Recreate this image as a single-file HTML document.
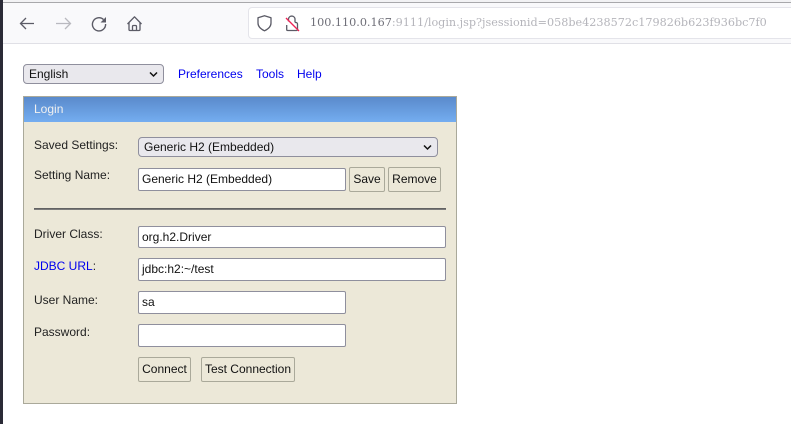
<!DOCTYPE html>
<html><head><meta charset="utf-8">
<style>
html,body{margin:0;padding:0;background:#fff;}
body{width:791px;height:424px;position:relative;overflow:hidden;font-family:"Liberation Sans",sans-serif;font-size:12px;color:#111;}
.a{position:absolute;white-space:nowrap;}
.lbl{position:absolute;left:34px;font-size:12px;line-height:14px;color:#222;white-space:nowrap;}
.in{position:absolute;box-sizing:border-box;background:#fff;border:1px solid #8f8f9d;border-radius:2px;font-size:12px;line-height:20px;padding-left:3px;color:#111;white-space:nowrap;overflow:hidden;}
.btn{position:absolute;box-sizing:border-box;background:#ece8d8;border:1px solid #aaa99a;border-radius:2px;font-size:12px;text-align:center;color:#111;white-space:nowrap;}
.sel{position:absolute;box-sizing:border-box;background:#e9e8ed;border:1px solid #8f8f9d;border-radius:4px;font-size:12px;color:#111;white-space:nowrap;}
a{color:#0000ee;text-decoration:none;}
</style></head><body>
<div class="a" style="left:0;top:0;width:791px;height:2px;background:#f2f2f4"></div>
<div class="a" style="left:0;top:2px;width:791px;height:1px;background:#a8a8ab"></div>
<div class="a" style="left:0;top:3px;width:791px;height:40px;background:#f9f9fb"></div>
<div class="a" style="left:0;top:43px;width:791px;height:1px;background:#e0e0e6"></div>
<div class="a" style="left:0;top:0;width:3px;height:424px;background:#2a2a36;z-index:5"></div>
<div class="a" style="left:248px;top:7px;width:560px;height:32px;box-sizing:border-box;background:#fff;border:1px solid #e4e4ea;border-radius:4px"></div>
<svg class="a" style="left:0;top:0" width="300" height="44" viewBox="0 0 300 44" fill="none">
<path d="M34 23.500H20.500M26 18L20.500 23.500L26 29" stroke="#5b5b66" stroke-width="1.300"/>
<path d="M56 23.500H70.500M65 18L70.500 23.500L65 29" stroke="#b9b9bf" stroke-width="1.300"/>
<path d="M103.500 19.500A6.600 6.600 0 1 0 105.600 24" stroke="#5b5b66" stroke-width="1.400"/>
<path d="M106 17V22.500H100.500Z" fill="#5b5b66"/>
<path d="M127.500 24L134.500 16.800L141.500 24M129 22.500V29.500A1 1 0 0 0 130 30.500H139A1 1 0 0 0 140 29.500V22.500M132.500 30.500V26.500A1 1 0 0 1 133.500 25.500H135.500A1 1 0 0 1 136.500 26.500V30.500" stroke="#5b5b66" stroke-width="1.300" stroke-linejoin="round"/>
<path d="M264.500 15.700L271 17.800V23C271 26.800 268 29.200 264.500 30.800C261 29.200 258 26.800 258 23V17.800Z" stroke="#5b5b66" stroke-width="1.300" stroke-linejoin="round"/>
<path d="M288.500 21.500V18.800A3.300 3.300 0 0 1 295 18.800V22.500" stroke="#5b5b66" stroke-width="1.300"/>
<path d="M286.700 25V29.500A1 1 0 0 0 287.700 30.500H296.500A1 1 0 0 0 297.500 29.500V24A1.500 1.500 0 0 0 296 22.500H295" stroke="#5b5b66" stroke-width="1.300"/>
<path d="M286 18L299 31" stroke="#ee2255" stroke-width="1.300"/>
</svg>
<div class="a" style="left:310px;top:16px;font:11.2px/14px 'DejaVu Serif',serif;color:#6f6f78;letter-spacing:0"><span>100.110.0.167</span><span style="color:#b5b5bb">:9111/login.jsp?jsessionid=058be4238572c179826b623f936bc7f0</span></div>

<div class="sel" style="left:23px;top:64px;width:141px;height:20px;line-height:18px;padding-left:5px">English</div>
<svg class="a" style="left:149px;top:71px" width="10" height="7" fill="none"><path d="M1 1.500L4.500 5L8 1.500" stroke="#111" stroke-width="1.500"/></svg>
<a class="a" style="left:178px;top:67px;line-height:14px">Preferences</a>
<a class="a" style="left:256px;top:67px;line-height:14px">Tools</a>
<a class="a" style="left:297px;top:67px;line-height:14px">Help</a>

<div class="a" style="left:23px;top:96px;width:434px;height:308px;box-sizing:border-box;background:#ece8d8;border:1px solid #aaa99a"></div>
<div class="a" style="left:24px;top:97px;width:432px;height:25px;background:linear-gradient(#5a8acb,#74adf0);color:#f0f0f0;line-height:24px;text-indent:10px">Login</div>

<div class="lbl" style="top:138px">Saved Settings:</div>
<div class="sel" style="left:138px;top:137px;width:300px;height:20px;line-height:18px;padding-left:5px">Generic H2 (Embedded)</div>
<svg class="a" style="left:423px;top:144px" width="10" height="7" fill="none"><path d="M1 1.500L4.500 5L8 1.500" stroke="#111" stroke-width="1.500"/></svg>

<div class="lbl" style="top:168px">Setting Name:</div>
<div class="in" style="left:138px;top:168px;width:208px;height:23px">Generic H2 (Embedded)</div>
<div class="btn" style="left:349px;top:167px;width:36px;height:25px;line-height:23px">Save</div>
<div class="btn" style="left:388px;top:167px;width:53px;height:25px;line-height:23px">Remove</div>

<div class="a" style="left:34px;top:208px;width:412px;height:2px;background:linear-gradient(#555,#888)"></div>

<div class="lbl" style="top:227px">Driver Class:</div>
<div class="in" style="left:138px;top:226px;width:308px;height:22px">org.h2.Driver</div>
<a class="lbl" style="top:259px;color:#0000ee">JDBC URL<span style="color:#222">:</span></a>
<div class="in" style="left:138px;top:258px;width:308px;height:23px">jdbc:h2:~/test</div>
<div class="lbl" style="top:293px">User Name:</div>
<div class="in" style="left:138px;top:291px;width:208px;height:23px">sa</div>
<div class="lbl" style="top:325px">Password:</div>
<div class="in" style="left:138px;top:324px;width:208px;height:23px"></div>
<div class="btn" style="left:138px;top:357px;width:53px;height:25px;line-height:23px">Connect</div>
<div class="btn" style="left:201px;top:357px;width:94px;height:25px;line-height:23px">Test Connection</div>
</body></html>
